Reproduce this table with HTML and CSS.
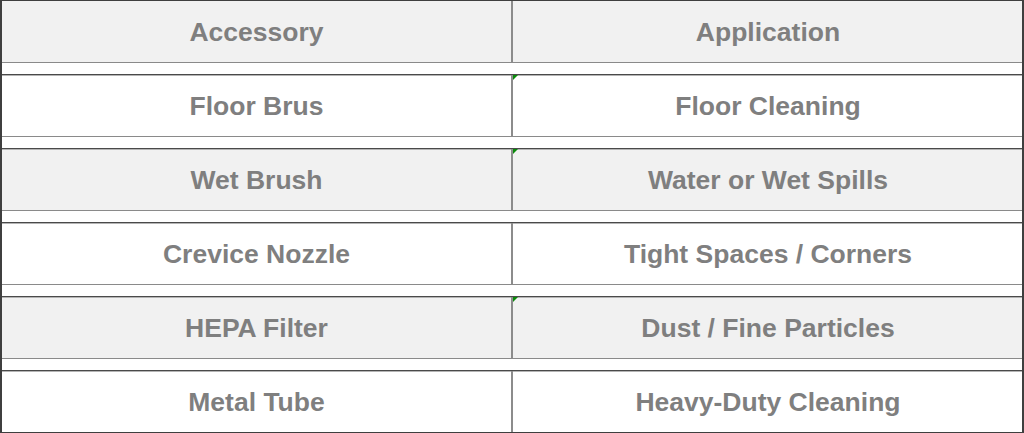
FILE: index.html
```html
<!DOCTYPE html>
<html lang="en">
<head>
<meta charset="utf-8">
<title>Accessories</title>
<link rel="stylesheet" href="styles.css">
</head>
<body>
<div class="table">
  <div class="row shade head">
    <div class="cell left">Accessory</div>
    <div class="cell right">Application</div>
  </div>
  <div class="row">
    <div class="cell left">Floor Brus</div>
    <div class="cell right flag">Floor Cleaning</div>
  </div>
  <div class="row shade">
    <div class="cell left">Wet Brush</div>
    <div class="cell right flag">Water or Wet Spills</div>
  </div>
  <div class="row">
    <div class="cell left">Crevice Nozzle</div>
    <div class="cell right">Tight Spaces / Corners</div>
  </div>
  <div class="row shade">
    <div class="cell left">HEPA Filter</div>
    <div class="cell right flag">Dust / Fine Particles</div>
  </div>
  <div class="row">
    <div class="cell left">Metal Tube</div>
    <div class="cell right">Heavy-Duty Cleaning</div>
  </div>
</div>
</body>
</html>
```

FILE: styles.css
```css
html, body {
  margin: 0;
  padding: 0;
  background: #ffffff;
}

.table {
  width: 1024px;
  height: 433px;
  box-sizing: border-box;
  border-left: 2px solid #3f3f3f;
  border-right: 2px solid #3f3f3f;
  display: flex;
  flex-direction: column;
  gap: 11px;
  font-family: "Liberation Sans", Arial, sans-serif;
  font-weight: bold;
  font-size: 26.5px;
  color: #7f7f7f;
}

.row {
  height: 63px;
  box-sizing: border-box;
  display: flex;
  border-top: 1px solid #4a4a4a;
  border-bottom: 1px solid #8a8a8a;
  box-shadow: inset 0 1px 0 #b4b4b4;
  background: #ffffff;
}

.row.head {
  border-top-color: #3f3f3f;
  box-shadow: none;
}

.row:last-child {
  border-bottom-color: #3f3f3f;
}

.shade {
  background: #f1f1f1;
}

.cell {
  display: flex;
  align-items: center;
  justify-content: center;
  position: relative;
  padding-top: 2px;
}

.left {
  width: 511px;
  box-sizing: border-box;
  border-right: 2px solid #8c8c8c;
}

.right {
  flex: 1;
  padding-left: 1px;
}

.flag::before {
  content: "";
  position: absolute;
  left: 0;
  top: 0;
  width: 0;
  height: 0;
  border-top: 5px solid #0a8a0a;
  border-right: 5px solid transparent;
}
```
